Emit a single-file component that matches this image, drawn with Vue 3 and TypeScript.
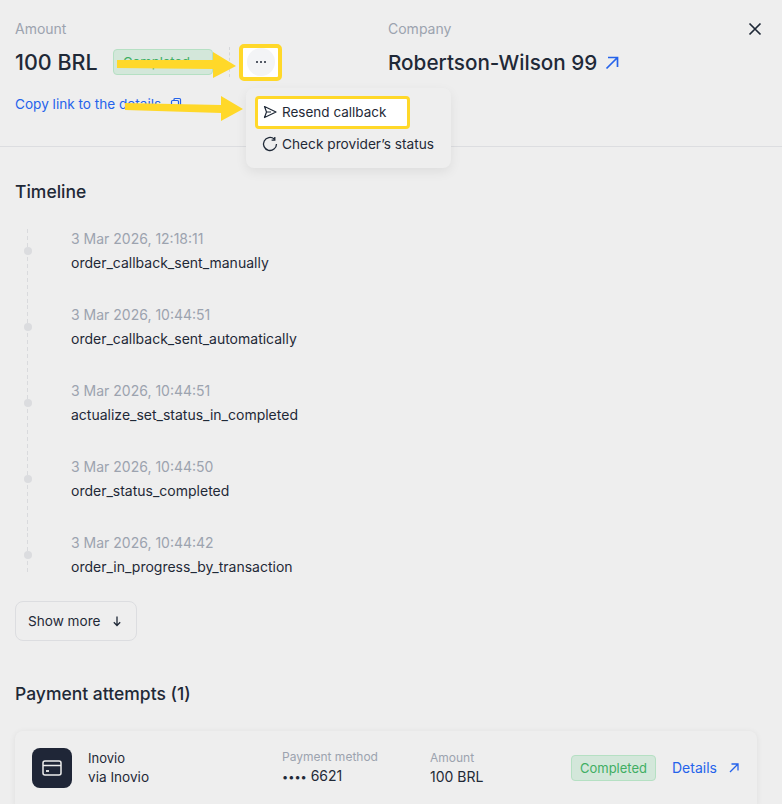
<script setup lang="ts">
interface TimelineEvent {
  date: string
  name: string
}

const events: TimelineEvent[] = [
  { date: '3 Mar 2026, 12:18:11', name: 'order_callback_sent_manually' },
  { date: '3 Mar 2026, 10:44:51', name: 'order_callback_sent_automatically' },
  { date: '3 Mar 2026, 10:44:51', name: 'actualize_set_status_in_completed' },
  { date: '3 Mar 2026, 10:44:50', name: 'order_status_completed' },
  { date: '3 Mar 2026, 10:44:42', name: 'order_in_progress_by_transaction' },
]
</script>

<template>
  <div class="page">
    <header class="head">
      <div class="amount-col">
        <div class="label">Amount</div>
        <div class="amount-row">
          <span class="amount">100 BRL</span>
          <span class="badge badge-top">Completed
            <svg width="10" height="10" viewBox="0 0 10 10" fill="none" stroke="#3fae63" stroke-width="1.2"><path d="M2 3.5 5 6.5 8 3.5" /></svg>
          </span>
          <span class="vline"></span>
          <span class="more-mark">
            <span class="more-btn">
              <svg width="12" height="4" viewBox="0 0 12 4" fill="#1f2937"><circle cx="2" cy="2" r="1" /><circle cx="6" cy="2" r="1" /><circle cx="10" cy="2" r="1" /></svg>
            </span>
          </span>
        </div>
        <div class="copy">Copy link to the details
          <svg width="14" height="14" viewBox="0 0 14 14" fill="none" stroke="#2563eb" stroke-width="1.2"><path d="M5 3V2.500A1 1 0 0 1 6 1.500h4.500A1 1 0 0 1 11.500 2.500V8A1 1 0 0 1 10.500 9H10" /><rect x="2.500" y="3.500" width="7" height="8.500" rx="1" /></svg>
        </div>
      </div>
      <div class="company-col">
        <div class="label">Company</div>
        <div class="company">Robertson-Wilson 99
          <svg class="ext" width="14" height="14" viewBox="0 0 14 14" fill="none" stroke="#2563eb" stroke-width="1.700"><path d="M1.500 12.500 12 2M3 1.500h9.500V11" /></svg>
        </div>
      </div>
      <svg class="close" width="14" height="14" viewBox="0 0 14 14" fill="none" stroke="#1f2937" stroke-width="1.700"><path d="M1.500 1.500 12.500 12.500M12.500 1.500 1.500 12.500" /></svg>

      <div class="menu">
        <div class="menu-item picked">
          <svg width="14" height="14" viewBox="0 0 14 14" fill="none" stroke="#1f2937" stroke-width="1.200" stroke-linejoin="round"><path d="M1.500 1.500 13 7 1.500 12.500 3.500 7ZM3.500 7H8" /></svg>
          Resend callback
        </div>
        <div class="menu-item">
          <svg width="16" height="16" viewBox="0 0 16 16" fill="none" stroke="#1f2937" stroke-width="1.300"><path d="M14.500 8A6.500 6.500 0 1 1 12.300 3.100M12.800 1v3.200H9.600" /></svg>
          Check provider’s status
        </div>
      </div>

      <svg class="arrow arrow-one" width="125" height="26" viewBox="0 0 125 26" fill="#ffd829"><path d="M0 8H96V0L119 14 96 26V17L0 16Z" /></svg>
      <svg class="arrow arrow-two" width="122" height="26" viewBox="0 0 122 26" fill="#ffd829"><path d="M0 7 96 9V0L118 13 96 25V17L0 14Z" /></svg>
    </header>

    <section class="timeline">
      <h2 class="title">Timeline</h2>
      <ul class="events">
        <li v-for="(ev, i) in events" :key="i" class="event">
          <div class="rail"><span class="dot"></span></div>
          <div>
            <div class="date">{{ ev.date }}</div>
            <div class="name">{{ ev.name }}</div>
          </div>
        </li>
      </ul>
      <button class="show-more">Show more
        <svg width="12" height="12" viewBox="0 0 12 12" fill="none" stroke="#1f2937" stroke-width="1.300"><path d="M6 1.500V10.500M2.800 7.300 6 10.500 9.200 7.300" /></svg>
      </button>
    </section>

    <section class="attempts">
      <h2 class="title">Payment attempts (1)</h2>
      <div class="card">
        <div class="card-icon">
          <svg width="20" height="16" viewBox="0 0 20 16" fill="none" stroke="#eeeeee" stroke-width="1.500"><rect x="1" y="1" width="18" height="14" rx="2" /><path d="M1 5.500H19" /><path d="M4 11H7" stroke-width="1.800" /></svg>
        </div>
        <div class="provider">
          <div class="provider-name">Inovio</div>
          <div class="provider-via">via Inovio</div>
        </div>
        <div class="field method">
          <div class="field-label">Payment method</div>
          <div class="field-value"><span class="bullets">••••</span> 6621</div>
        </div>
        <div class="field sum">
          <div class="field-label">Amount</div>
          <div class="field-value">100 BRL</div>
        </div>
        <span class="badge badge-card">Completed</span>
        <span class="details">Details
          <svg width="12" height="12" viewBox="0 0 12 12" fill="none" stroke="#2563eb" stroke-width="1.300"><path d="M2 10 10 2M3.500 2H10V8.500" /></svg>
        </span>
      </div>
    </section>
  </div>
</template>

<style>
html, body {
  background: #eeeeee;
}
</style>

<style scoped>
.page {
  width: 782px;
  height: 804px;
  overflow: hidden;
  background: #eeeeee;
  font-family: Inter, "Liberation Sans", sans-serif;
  color: #1f2937;
  font-size: 14px;
}

/* header */
.head {
  position: relative;
  display: flex;
  height: 147px;
  box-sizing: border-box;
  padding: 20px 15px 0;
  border-bottom: 1px solid #dcdde0;
}
.amount-col { width: 373px; }
.label {
  color: #9ca3af;
  font-size: 14px;
  line-height: 18px;
}
.amount-row {
  display: flex;
  align-items: center;
  height: 36px;
  margin-top: 6px;
}
.amount {
  font-size: 21.500px;
  font-weight: 450;
  line-height: 30px;
  width: 98px;
  white-space: nowrap;
}
.badge {
  display: inline-flex;
  align-items: center;
  box-sizing: border-box;
  color: #3fae63;
  background: #d3e7da;
  border: 1px solid #b5e0c3;
  border-radius: 4px;
  font-size: 13px;
}
.badge-top {
  width: 100px;
  height: 26px;
  padding-left: 9px;
  gap: 4px;
}
.vline {
  height: 30px;
  margin-left: 16px;
  border-left: 1px dashed #d6d7da;
}
.more-mark {
  display: flex;
  align-items: center;
  justify-content: center;
  box-sizing: border-box;
  width: 43px;
  height: 37px;
  margin-left: 9px;
  background: #fff;
  border: 4px solid #ffd829;
  border-radius: 5px;
}
.more-btn {
  display: flex;
  align-items: center;
  justify-content: center;
  width: 28px;
  height: 28px;
  border-radius: 50%;
  background: #f3f4f6;
}
.copy {
  display: flex;
  align-items: center;
  gap: 8px;
  margin-top: 14px;
  color: #2563eb;
  font-size: 13.600px;
  line-height: 20px;
}
.company {
  display: flex;
  align-items: center;
  gap: 8px;
  margin-top: 7px;
  font-size: 20.700px;
  font-weight: 450;
  line-height: 36px;
}
.close {
  position: absolute;
  top: 22px;
  right: 20px;
}

/* dropdown */
.menu {
  position: absolute;
  left: 246px;
  top: 88px;
  width: 205px;
  height: 80px;
  box-sizing: border-box;
  padding: 7px 8px;
  border-radius: 8px;
  background: #eeeeee;
  box-shadow: 0 4px 12px rgba(0, 0, 0, 0.07);
  z-index: 2;
}
.menu-item {
  display: flex;
  align-items: center;
  gap: 4px;
  height: 32px;
  padding: 0 0 2px 8px;
  font-size: 13.700px;
  white-space: nowrap;
  box-sizing: border-box;
}
.menu-item.picked {
  gap: 5px;
  width: 155px;
  height: 33px;
  margin: 1px 0 0 1px;
  padding: 0 0 2px 5px;
  font-size: 13.500px;
  background: #fff;
  border: 3.500px solid #ffd829;
  border-radius: 4px;
}
.arrow {
  position: absolute;
  z-index: 3;
}
.arrow-one { left: 117px; top: 52px; }
.arrow-two { left: 125px; top: 96px; }

/* timeline */
.timeline { padding: 34px 15px 0; }
.title {
  margin: 0;
  font-size: 17.500px;
  font-weight: 450;
  line-height: 22px;
}
.events {
  list-style: none;
  margin: 26px 0 0;
  padding: 0;
}
.event {
  display: flex;
  height: 76px;
}
.event:last-child { height: 42px; }
.rail {
  position: relative;
  width: 56px;
}
.rail::before {
  content: "";
  position: absolute;
  left: 12px;
  top: 0;
  bottom: 0;
  width: 1px;
  background: repeating-linear-gradient(to bottom, #d9dadd 0 4px, transparent 4px 7px);
}
.dot {
  position: absolute;
  left: 9px;
  top: 18px;
  width: 8px;
  height: 8px;
  border-radius: 50%;
  background: #dbdcdf;
}
.date {
  color: #9ca3af;
  font-size: 14px;
  line-height: 20px;
}
.name {
  margin-top: 4px;
  font-size: 14px;
  line-height: 20px;
  white-space: nowrap;
}
.show-more {
  display: flex;
  align-items: center;
  gap: 10px;
  height: 40px;
  width: 122px;
  margin-top: 26px;
  padding: 0 0 0 12px;
  border: 1px solid #dcdde0;
  border-radius: 8px;
  background: transparent;
  color: #1f2937;
  font: inherit;
  font-size: 13.600px;
}

/* attempts */
.attempts { padding: 42px 15px 0; }
.card {
  position: relative;
  display: flex;
  align-items: center;
  height: 74px;
  margin: 26px 10px 0 0;
  padding: 0 17px;
  border-radius: 8px 8px 0 0;
  background: #eeeeee;
  box-shadow: 0 1px 6px rgba(0, 0, 0, 0.07);
}
.card-icon {
  display: flex;
  align-items: center;
  justify-content: center;
  flex: none;
  width: 40px;
  height: 40px;
  border-radius: 8px;
  background: #1f2637;
}
.provider {
  width: 194px;
  margin-left: 16px;
  font-size: 13px;
  line-height: 19px;
}
.provider-via { font-size: 13.600px; }
.field {
  line-height: 19px;
  margin-top: -3px;
}
.method { width: 148px; }
.sum { width: 141px; }
.field-label {
  color: #9ca3af;
  font-size: 12px;
}
.field-value { font-size: 14px; }
.bullets { font-size: 11px; }
.badge-card {
  flex: none;
  justify-content: center;
  width: 85px;
  height: 26px;
}
.details {
  display: flex;
  align-items: center;
  gap: 11px;
  margin: -1px 0 0 16px;
  color: #2563eb;
}
</style>
